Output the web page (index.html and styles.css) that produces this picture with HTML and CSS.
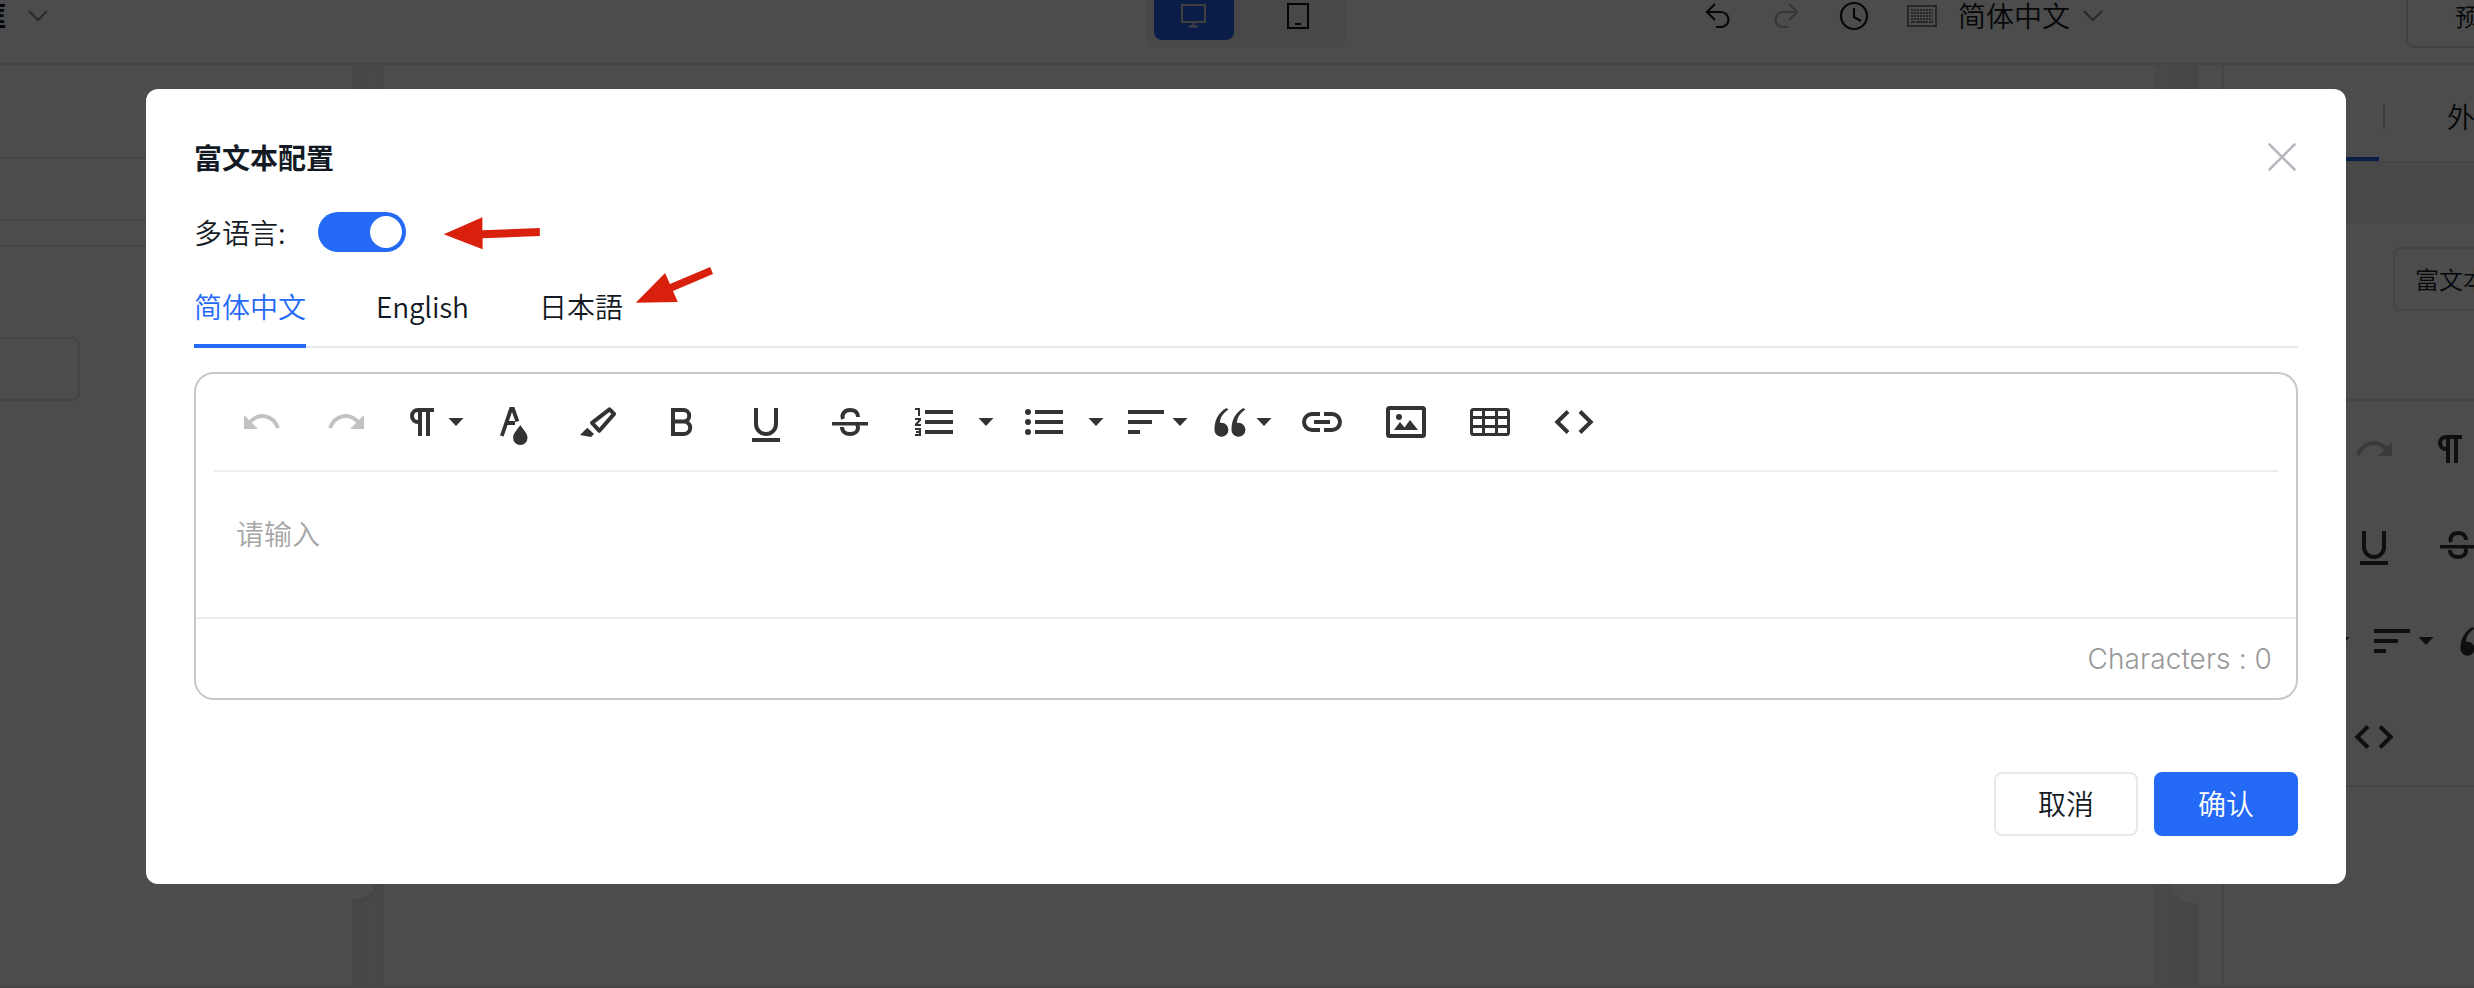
FILE: index.html
```html
<!DOCTYPE html>
<html lang="zh-CN">
<head>
<meta charset="utf-8">
<title>富文本配置</title>
<link rel="stylesheet" href="styles.css">
</head>
<body>
<svg class="sprite" aria-hidden="true">
  <symbol id="i-redo" viewBox="0 0 48 48"><path fill="currentColor" d="M42 17v14H28z"/><path fill="none" stroke="currentColor" stroke-width="4" d="M8 30C13 17 27 14 36 24"/></symbol>
  <symbol id="i-undo" viewBox="0 0 48 48"><path fill="currentColor" d="M6 17v14h14z"/><path fill="none" stroke="currentColor" stroke-width="4" d="M40 30C35 17 21 14 12 24"/></symbol>
  <symbol id="i-para" viewBox="0 0 48 48"><path fill="none" stroke="currentColor" stroke-width="4" d="M36 12H20a6 6 0 0 0 0 12h2M22 12v26M30 12v26"/></symbol>
  <symbol id="i-color" viewBox="0 0 48 48"><path fill="none" stroke="currentColor" stroke-width="3.8" d="M11.8 38L21 11h2l4.400 12.500M16 25h9"/><path fill="currentColor" d="M30.3 27c-3 4.500-7.200 8.500-7.200 12.800a7.200 7.200 0 0 0 14.400 0c0-4.300-4.200-8.300-7.200-12.800z"/></symbol>
  <symbol id="i-brush" viewBox="0 0 48 48"><path fill="none" stroke="currentColor" stroke-width="4" stroke-linejoin="round" d="M35.500 11.300l4.600 4.600-14.700 16.900-7.400-8z"/><path fill="currentColor" d="M6 37l7.300-7.300L20 36l-3 3z"/></symbol>
  <symbol id="i-bold" viewBox="0 0 48 48"><path fill="none" stroke="currentColor" stroke-width="4" d="M15 12h10.500a5.700 5.700 0 0 1 0 11.500H15h11a6.200 6.200 0 0 1 0 12.500H15z"/></symbol>
  <symbol id="i-underline" viewBox="0 0 48 48"><path fill="none" stroke="currentColor" stroke-width="4" d="M14 10v16a10 10 0 0 0 20 0V10M10 42h28"/></symbol>
  <symbol id="i-strike" viewBox="0 0 48 48"><path fill="none" stroke="currentColor" stroke-width="4" d="M17 21c-2-5 2-9 7-9s8 2.500 8 7M16 29c0 4.500 3.500 7 8 7s8-2.500 8-6.500c0-2-.7-3.500-2-4.500"/><path stroke="currentColor" stroke-width="3.400" d="M6 25.800h36"/></symbol>
  <symbol id="i-ol" viewBox="0 0 48 48"><path fill="none" stroke="currentColor" stroke-width="4" d="M15 14h28M15 24h28M15 34h28"/><path fill="none" stroke="currentColor" stroke-width="2" d="M5 11h4v7M5 21h5v1l-4 4.500v.5h5M5 31h5v6H5M6 34h4"/></symbol>
  <symbol id="i-ul" viewBox="0 0 48 48"><path fill="none" stroke="currentColor" stroke-width="4" d="M15 14h28M15 24h28M15 34h28"/><g fill="currentColor"><circle cx="8" cy="14" r="3"/><circle cx="8" cy="24" r="3"/><circle cx="8" cy="34" r="3"/></g></symbol>
  <symbol id="i-align" viewBox="0 0 48 48"><path fill="none" stroke="currentColor" stroke-width="4" d="M6 14h36M6 24h24M6 34h12"/></symbol>
  <symbol id="i-quote" viewBox="0 0 48 48"><g fill="currentColor"><path d="M20.500 10C12.500 14.500 8.500 22 8.500 31a7 7 0 1 0 7-6.200c-.6 0-1.100 0-1.600.2.300-5.500 3-10 8.400-13.300z"/><path transform="translate(17)" d="M20.500 10C12.500 14.500 8.500 22 8.500 31a7 7 0 1 0 7-6.200c-.6 0-1.100 0-1.600.2.300-5.500 3-10 8.400-13.300z"/></g></symbol>
  <symbol id="i-link" viewBox="0 0 48 48"><path fill="none" stroke="currentColor" stroke-width="4" d="M22 16h-8a8 8 0 0 0 0 16h8M26 16h8a8 8 0 0 1 0 16h-8M16 24h16"/></symbol>
  <symbol id="i-image" viewBox="0 0 48 48"><rect x="6" y="10" width="36" height="28" rx="1.500" fill="none" stroke="currentColor" stroke-width="4"/><circle cx="17" cy="19" r="3" fill="currentColor"/><path fill="currentColor" d="M12 32l6-8 4.500 5.500L28 22l8 10z"/></symbol>
  <symbol id="i-table" viewBox="0 0 48 48"><rect x="5.500" y="11.500" width="37" height="25" rx="2" fill="none" stroke="currentColor" stroke-width="3"/><path stroke="currentColor" stroke-width="3" d="M17.500 11v26M30.500 11v26M5 19.500h38M5 28.500h38"/></symbol>
  <symbol id="i-code" viewBox="0 0 48 48"><path fill="none" stroke="currentColor" stroke-width="4" d="M18 13.500L7.300 24 18 34.500M30 13.500L40.700 24 30 34.500"/></symbol>
  <symbol id="i-caret" viewBox="0 0 16 8"><path fill="currentColor" d="M.5 0h15L8 8z"/></symbol>
  <symbol id="i-chevron" viewBox="0 0 20 12"><path fill="none" stroke="currentColor" stroke-width="2" d="M1 1l9 9 9-9"/></symbol>
</svg>

<div class="app">
  <header class="topbar">
    <span class="page-name">框</span>
    <svg class="chevron chevron-left"><use href="#i-chevron"/></svg>
    <div class="devices">
      <div class="device device-on"><svg width="26" height="24" viewBox="0 0 26 24" fill="none" stroke="currentColor" stroke-width="2"><path d="M1 1h23v17H1zM12.500 18v4M8 22.500h9"/></svg></div>
      <div class="device"><svg width="22" height="26" viewBox="0 0 22 26" fill="none" stroke="currentColor" stroke-width="2"><path d="M1 1h20v24H1zM8 21h6"/></svg></div>
    </div>
    <svg class="tool t-undo" viewBox="0 0 28 28"><path d="M11 2L3 10l8 8M3 10h14a7.500 7.500 0 0 1 0 15h-5"/></svg>
    <svg class="tool t-redo" viewBox="0 0 28 28"><path d="M17 2l8 8-8 8M25 10H11a7.500 7.500 0 0 0 0 15h5"/></svg>
    <svg class="tool t-clock" viewBox="0 0 28 28"><circle cx="14" cy="14" r="13"/><path d="M14 6v9l7 4"/></svg>
    <svg class="keyboard" viewBox="0 0 30 22"><path d="M1 1h28v20H1z" fill="none" stroke="currentColor" stroke-width="2"/><path d="M4 5h22M4 8h22M4 11h22M4 14h22" stroke="currentColor" stroke-width="2" stroke-dasharray="2.200 .8"/><path d="M4 17h4M9 17h12M22 17h4" stroke="currentColor" stroke-width="2"/></svg>
    <span class="lang">简体中文</span>
    <svg class="chevron"><use href="#i-chevron"/></svg>
    <div class="preview">预览</div>
  </header>

  <div class="workspace">
    <aside class="left">
      <div class="left-a"></div><div class="left-b"></div><div class="left-c"></div>
      <div class="left-input"></div>
    </aside>
    <div class="gutter gutter-left"><svg width="26" height="22" viewBox="0 0 26 22"><path d="M0 0h25C22 14 13 14.500 0 18z" fill="#fefefe"/><path d="M25 0C20 17 11 14 0 18" fill="none" stroke="#e6e6e6" stroke-width="3"/></svg></div>
    <main class="canvas"></main>
    <div class="gutter gutter-right"><svg width="28" height="22" viewBox="0 0 28 22"><path d="M0 0h28v20C10 17 6 12 0 0z" fill="#fefefe"/></svg></div>
    <aside class="right">
      <div class="right-tabs"><i class="tab-mark"></i><i class="tab-split"></i><span>外观</span></div>
      <div class="band"></div>
      <div class="select">富文本</div>
      <div class="side-editor">
        <div class="side-row r1"><svg class="ic off"><use href="#i-redo"/></svg><svg class="ic"><use href="#i-para"/></svg></div>
        <div class="side-row r2"><svg class="ic"><use href="#i-underline"/></svg><svg class="ic"><use href="#i-strike"/></svg></div>
        <div class="side-row r3"><svg class="caret"><use href="#i-caret"/></svg><svg class="ic"><use href="#i-align"/></svg><svg class="caret"><use href="#i-caret"/></svg><svg class="ic"><use href="#i-quote"/></svg></div>
        <div class="side-row r4"><svg class="ic"><use href="#i-code"/></svg></div>
      </div>
    </aside>
  </div>
</div>

<div class="mask">
  <section class="modal">
    <div class="modal-head">
      <h1>富文本配置</h1>
      <svg class="close" viewBox="0 0 28 28"><path d="M1.500 1.500l25 25M26.500 1.500l-25 25"/></svg>
    </div>
    <div class="switch-row"><span>多语言:</span><div class="switch"><i></i></div></div>
    <nav class="tabs"><span class="tab tab-on">简体中文</span><span class="tab tab-en">English</span><span class="tab" lang="ja">日本語</span></nav>
    <div class="editor">
      <div class="toolbar">
        <svg class="ic off"><use href="#i-undo"/></svg>
        <svg class="ic off"><use href="#i-redo"/></svg>
        <div class="drop pull-8"><svg class="ic"><use href="#i-para"/></svg><svg class="caret"><use href="#i-caret"/></svg></div>
        <svg class="ic pull-10"><use href="#i-color"/></svg>
        <svg class="ic"><use href="#i-brush"/></svg>
        <svg class="ic"><use href="#i-bold"/></svg>
        <svg class="ic"><use href="#i-underline"/></svg>
        <svg class="ic"><use href="#i-strike"/></svg>
        <div class="drop wide"><svg class="ic"><use href="#i-ol"/></svg><svg class="caret"><use href="#i-caret"/></svg></div>
        <div class="drop wide pull-10"><svg class="ic"><use href="#i-ul"/></svg><svg class="caret"><use href="#i-caret"/></svg></div>
        <div class="drop pull-18"><svg class="ic"><use href="#i-align"/></svg><svg class="caret"><use href="#i-caret"/></svg></div>
        <div class="drop pull-18"><svg class="ic"><use href="#i-quote"/></svg><svg class="caret"><use href="#i-caret"/></svg></div>
        <svg class="ic pull-10"><use href="#i-link"/></svg>
        <svg class="ic"><use href="#i-image"/></svg>
        <svg class="ic"><use href="#i-table"/></svg>
        <svg class="ic"><use href="#i-code"/></svg>
      </div>
      <div class="content">请输入</div>
      <div class="counter">Characters : 0</div>
    </div>
    <div class="actions"><button class="btn">取消</button><button class="btn btn-ok">确认</button></div>
    <svg class="marks" viewBox="0 0 280 100"><path d="M3.700 34.300L42.400 17.300V30.300L99.800 28v8L42.600 38.200V49.300z"/><path d="M195.800 102.700L225.100 73L229.900 84L270.200 67L273 74L233 91L237.800 102z"/></svg>
  </section>
</div>
</body>
</html>
```
FILE: styles.css
```css
* { box-sizing: border-box; }
body {
  margin: 0;
  width: 2474px;
  height: 988px;
  overflow: hidden;
  position: relative;
  background: #fff;
  color: #141a24;
  font: 350 28px/40px "Noto Sans CJK SC", "Noto Sans", sans-serif;
}
svg { display: block; flex: none; overflow: visible; }
.sprite { position: absolute; width: 0; height: 0; }
.ic { width: 48px; height: 48px; color: #333; }
.off { color: #c2c2c2; }
.caret { width: 16px; height: 8px; color: #333; }

/* Page behind the dialog */
.app { height: 988px; overflow: hidden; background: #fefefe; border-bottom: 2px solid #eee8ea; }
.topbar {
  display: flex;
  align-items: center;
  margin-top: -31px;
  height: 96px;
  border-bottom: 2px solid #e8e8e8;
  white-space: nowrap;
}
.page-name { width: 28px; margin-left: -22px; padding-bottom: 2px; font-weight: 700; flex: none; }
.chevron { width: 20px; height: 12px; color: #888; }
.chevron-left { margin-left: 22px; }
.devices { display: flex; flex: none; margin-left: 1098px; width: 200px; height: 64px; padding: 8px; border-radius: 8px; background: #f0f0f0; }
.device { width: 80px; height: 48px; display: flex; align-items: center; justify-content: center; border-radius: 8px; color: #141420; }
.device + .device { margin-left: 24px; }
.device-on { background: #2463f5; color: #d8d8d8; }
.tool { width: 28px; height: 28px; fill: none; stroke: currentColor; stroke-width: 2.2; }
.t-undo { margin-left: 358px; }
.t-redo { margin-left: 40px; color: #b4b4b4; }
.t-clock { margin-left: 40px; }
.keyboard { width: 30px; height: 22px; margin-left: 39px; color: #888; }
.lang { margin: 0 13px 0 21px; padding-bottom: 2px; flex: none; }
.preview { flex: none; margin-left: 303px; width: 160px; height: 64px; padding-left: 47px; line-height: 60px; font-size: 24px; border: 2px solid #dedede; border-radius: 8px; }

.workspace { display: flex; height: 921px; }
.left { width: 352px; flex: none; }
.left-a { height: 94px; border-bottom: 2px solid #e8e8e8; }
.left-b { height: 62px; border-bottom: 2px solid #e8e8e8; }
.left-c { height: 26px; border-bottom: 2px solid #e8e8e8; }
.left-input { width: 80px; height: 64px; margin-top: 90px; border: 2px solid #e4e4e4; border-left: 0; border-radius: 0 8px 8px 0; }
.gutter { flex: none; padding-top: 819px; }
.gutter-left { width: 32px; background: linear-gradient(90deg, #e9e9e9, #f2f2f2 50%, #f2f2f2 85%, #ececec); }
.gutter-right { width: 44px; padding-left: 16px; background: linear-gradient(90deg, #f4f4f4, #eee 60%, #e6e6e6); }
.canvas { flex: 1; }
.right { width: 276px; flex: none; overflow: hidden; background: linear-gradient(#e8e8e8, #e8e8e8) 24px 0 / 2px 100% no-repeat; }
.right-tabs { display: flex; height: 98px; margin-left: 26px; border-bottom: 2px solid #e8e8e8; white-space: nowrap; }
.right-tabs span { flex: none; margin-left: 62px; line-height: 102px; }
.tab-mark { flex: none; width: 155px; height: 4px; margin-top: 92px; background: #2463f5; }
.tab-split { flex: none; width: 2px; height: 24px; margin: 40px 0 0 4px; background: #c8c8c8; }
.band { height: 60px; margin-left: 26px; background: #f0f0f0; }
.select { width: 200px; height: 64px; margin: 24px 0 0 195px; padding-left: 20px; font-size: 24px; line-height: 60px; border: 2px solid #e4e4e4; border-radius: 8px; }
.side-editor { height: 388px; margin: 88px 0 0 26px; border: solid #e4e4e4; border-width: 2px 0; }
.side-row { display: flex; align-items: center; height: 48px; margin: 0 0 48px 126px; }
.r1 { margin-top: 24px; gap: 28px; }
.r2 { gap: 36px; }
.r3 { margin-left: 110px; gap: 2px; }
.r3 .ic:first-of-type, .r3 .caret:first-child { margin-right: 16px; }
.r3 .ic:last-child { margin-left: 16px; }

/* Dialog */
.mask { position: absolute; inset: 0; padding: 89px 128px 0 146px; background: rgba(0, 0, 0, .7); }
.modal { position: relative; width: 2200px; height: 795px; padding: 48px; background: #fff; border-radius: 12px; }
.modal-head { display: flex; justify-content: space-between; align-items: center; height: 40px; padding-right: 2px; }
h1 { margin: 0; font-size: 28px; font-weight: 700; }
.close { width: 28px; height: 28px; fill: none; stroke: #b7b9c1; stroke-width: 2.6; stroke-linecap: round; }
.switch-row { display: flex; align-items: center; height: 40px; margin-top: 35px; }
.switch-row span { width: 124px; }
.switch { width: 88px; height: 40px; padding: 4px; border-radius: 20px; background: #246af6; }
.switch i { display: block; width: 32px; height: 32px; margin-left: auto; border-radius: 50%; background: #fff; }
.tabs { display: flex; gap: 70px; height: 82px; margin-top: 14px; box-shadow: inset 0 -2px #e9e9e9; }
.tab { height: 82px; line-height: 80px; }
.tab-on { color: #246af6; border-bottom: 4px solid #246af6; }
.tab-en { width: 93px; letter-spacing: -.2px; }
.editor { height: 328px; margin-top: 24px; border: 2px solid #c9c9c9; border-radius: 20px; }
.toolbar { display: flex; align-items: center; gap: 36px; height: 98px; margin: 0 18px; padding: 0 24px; border-bottom: 2px solid #eee; }
.drop { display: flex; align-items: center; gap: 2px; flex: none; }
.drop.wide { gap: 20px; }
.pull-8 { margin-left: -8px; }
.pull-10 { margin-left: -10px; }
.pull-18 { margin-left: -18px; }
.content { height: 147px; padding: 41px 40px; color: #a6a6a6; border-bottom: 2px solid #eee; }
.counter { padding: 20px 24px; text-align: right; color: #999; font-family: Inter, sans-serif; font-weight: 300; letter-spacing: .1px; }
.actions { display: flex; justify-content: flex-end; gap: 16px; margin-top: 72px; }
.btn { width: 144px; height: 64px; padding: 0 0 2px; font: inherit; color: inherit; background: #fff; border: 2px solid #e8e8e8; border-radius: 8px; }
.btn-ok { color: #fff; background: #246af6; border-color: #246af6; }
.marks { position: absolute; left: 294px; top: 111px; width: 280px; height: 100px; fill: #d9200d; }
```
